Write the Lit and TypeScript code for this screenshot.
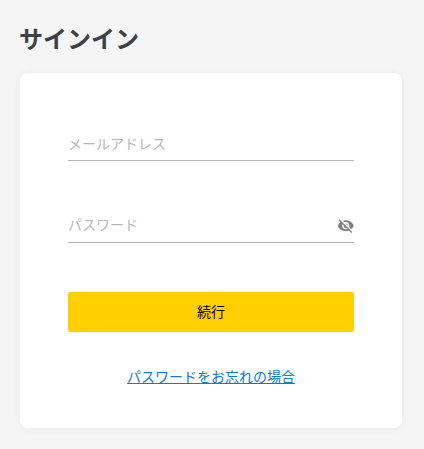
import { LitElement, html, css } from "lit";
import { customElement } from "lit/decorators.js";

@customElement("app-root")
export class AppRoot extends LitElement {
  static styles = css`
    :host {
      display: block;
      width: 424px;
      height: 449px;
      box-sizing: border-box;
      padding: 0 22px 0 20px;
      background: #f5f5f5;
      font-family: "Noto Sans CJK JP", "Noto Sans", sans-serif;
      overflow: hidden;
    }
    h1 {
      margin: 0;
      height: 73px;
      box-sizing: border-box;
      padding-top: 21px;
      margin-left: -1px;
      font-size: 24px;
      line-height: 34px;
      font-weight: 700;
      color: #3c4148;
    }
    .card {
      height: 355px;
      box-sizing: border-box;
      padding: 48px 48px 0;
      background: #fff;
      border-radius: 8px;
      box-shadow: 0 0 10px rgba(0, 0, 0, 0.05);
      display: flex;
      flex-direction: column;
    }
    .field {
      height: 40px;
      box-sizing: border-box;
      border-bottom: 1px solid #b8b8b8;
      display: flex;
      align-items: center;
      justify-content: space-between;
      font-size: 14px;
      line-height: 20px;
      color: #b8b8b8;
    }
    .field + .field {
      margin-top: 41px;
      height: 41px;
    }
    .field span {
      padding-top: 4px;
    }
    .field + .field span {
      padding-top: 4px;
    }
    svg {
      display: block;
      margin-top: 8px;
      margin-right: -0.7px;
    }
    button {
      margin-top: 49px;
      height: 40px;
      padding: 0 0 2px;
      border: 0;
      border-radius: 2px;
      background: #ffcf00;
      color: #000;
      font: inherit;
      font-size: 14px;
    }
    a {
      margin-top: 34px;
      text-align: center;
      font-size: 14px;
      line-height: 20px;
      color: #0b7cc5;
      text-decoration: underline;
    }
  `;

  render() {
    return html`
      <h1>サインイン</h1>
      <div class="card">
        <div class="field"><span>メールアドレス</span></div>
        <div class="field">
          <span>パスワード</span>
          <svg width="17.5" height="17.5" viewBox="0 0 24 24" fill="#808080" aria-hidden="true">
            <path d="M12 7c2.76 0 5 2.24 5 5 0 .65-.13 1.26-.36 1.83l2.92 2.92c1.51-1.26 2.7-2.89 3.43-4.75-1.73-4.39-6-7.5-11-7.5-1.4 0-2.74.25-3.98.7l2.16 2.16C10.74 7.13 11.35 7 12 7zM2 4.27l2.28 2.28.46.46C3.08 8.3 1.78 10.02 1 12c1.73 4.39 6 7.5 11 7.5 1.55 0 3.03-.3 4.38-.84l.42.42L19.73 22 21 20.73 3.27 3 2 4.27zM7.53 9.8l1.55 1.55c-.05.21-.08.43-.08.65 0 1.66 1.34 3 3 3 .22 0 .44-.03.65-.08l1.55 1.55c-.67.33-1.41.53-2.2.53-2.76 0-5-2.24-5-5 0-.79.2-1.53.53-2.2zm4.31-.78l3.15 3.15.02-.16c0-1.66-1.34-3-3-3l-.17.01z"/>
          </svg>
        </div>
        <button type="button">続行</button>
        <a href="#">パスワードをお忘れの場合</a>
      </div>
    `;
  }
}
